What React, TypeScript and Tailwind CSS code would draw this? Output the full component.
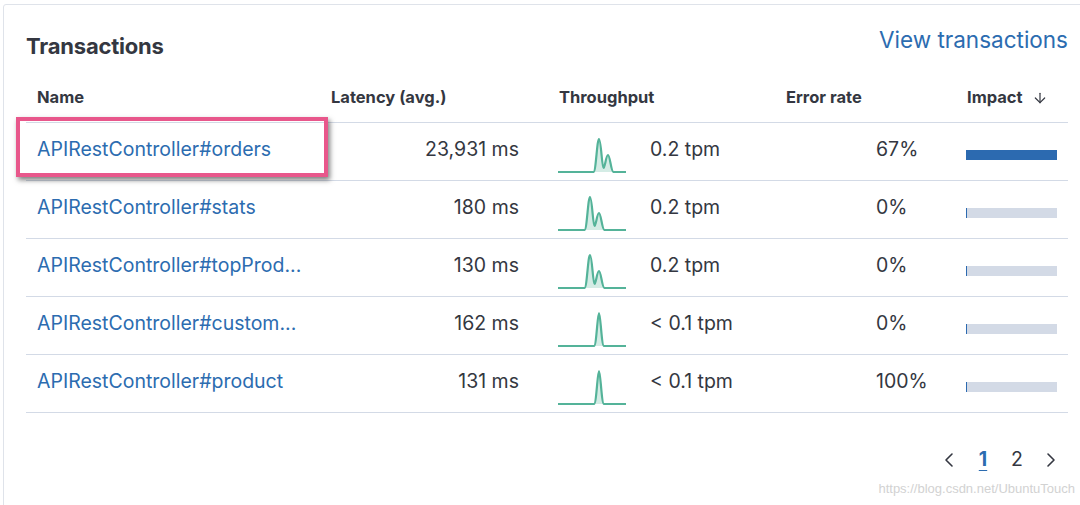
import React from 'react';
import { ArrowDown, ChevronLeft, ChevronRight } from 'lucide-react';

type Row = {
    name: string;
    latency: string;
    throughput: string;
    errorRate: string;
    impact: number;
    spark: 'double' | 'doubleEarly' | 'single';
};

const rows: Row[] = [
    { name: 'APIRestController#orders', latency: '23,931 ms', throughput: '0.2 tpm', errorRate: '67%', impact: 100, spark: 'double' },
    { name: 'APIRestController#stats', latency: '180 ms', throughput: '0.2 tpm', errorRate: '0%', impact: 0, spark: 'doubleEarly' },
    { name: 'APIRestController#topProd...', latency: '130 ms', throughput: '0.2 tpm', errorRate: '0%', impact: 0, spark: 'doubleEarly' },
    { name: 'APIRestController#custom...', latency: '162 ms', throughput: '< 0.1 tpm', errorRate: '0%', impact: 0, spark: 'single' },
    { name: 'APIRestController#product', latency: '131 ms', throughput: '< 0.1 tpm', errorRate: '100%', impact: 0, spark: 'single' },
];

// sparkline curves, drawn in a 68x36 box with the baseline at y=35
const sparkPaths: Record<Row['spark'], string> = {
    double: 'M0 35 L35.5 35 C38 35 39 2 41 2 C43 2 44 31 45.5 31 C47 31 48 18 50 18 C52 18 53 35 55.5 35 L68 35',
    doubleEarly: 'M0 35 L26.5 35 C29 35 30 2 32 2 C34 2 35 31 36.5 31 C38 31 39 18 41 18 C43 18 44 35 46.5 35 L68 35',
    single: 'M0 35 L36 35 C38.5 35 39.5 2 41 2 C42.5 2 43.5 35 46 35 L68 35',
};

const Sparkline: React.FC<{ kind: Row['spark'] }> = ({ kind }) => (
    <svg width="68" height="36" viewBox="0 0 68 36" className="shrink-0 mt-[6px]">
        <path d={sparkPaths[kind] + ' Z'} fill="#54b399" fillOpacity="0.25" stroke="none" />
        <path d={sparkPaths[kind]} fill="none" stroke="#54b399" strokeWidth="2.2" strokeLinejoin="round" />
    </svg>
);

const ImpactBar: React.FC<{ value: number }> = ({ value }) => (
    <div className="relative w-[91px] h-[10px] bg-[#d3dae6] mt-[6px]">
        <div className="absolute left-0 top-0 h-full bg-[#2c6ab0]" style={{ width: `${Math.max(value, 1.6)}%` }} />
    </div>
);

const cols = 'grid grid-cols-[294px_228px_227px_180px_113px]';

const App: React.FC = () => {
    return (
        <div className="relative w-[1080px] h-[505px] overflow-hidden bg-white text-[#343741]" style={{ fontFamily: 'Inter, "Noto Sans", sans-serif' }}>
            <div className="ml-[3px] mt-[4px] w-[1100px] h-[540px] border border-[#dfe3ea] rounded-[3px] pt-[21px] pl-[22px]">
                <div className="flex w-[1042px] justify-between items-start">
                    <h2 className="mt-[6px] text-[22px] leading-[28px] font-bold tracking-[-0.2px]">Transactions</h2>
                    <a className="text-[22.5px] leading-[28px] text-[#2c6cb0]">View transactions</a>
                </div>

                <div className="w-[1042px] mt-[13px]">
                    <div className={`${cols} h-[50px] border-b border-[#d3dae6] items-center text-[16.5px] font-bold`}>
                        <div className="px-[11px]">Name</div>
                        <div className="px-[11px]">Latency (avg.)</div>
                        <div className="px-[11px]">Throughput</div>
                        <div className="px-[11px]">Error rate</div>
                        <div className="px-[12px] flex items-center gap-[9px]">
                            Impact
                            <ArrowDown size={16} strokeWidth={1.8} />
                        </div>
                    </div>

                    {rows.map((r) => (
                        <div key={r.name} className={`${cols} h-[58px] border-b border-[#d3dae6] items-center text-[19.5px]`}>
                            <div className="px-[11px] pb-[4px] text-[#2c6cb0] whitespace-nowrap">{r.name}</div>
                            <div className="pr-[29px] pb-[4px] text-right">{r.latency}</div>
                            <div className="pl-[10px] flex items-center">
                                <Sparkline kind={r.spark} />
                                <span className="ml-[24px] pb-[4px] whitespace-nowrap">{r.throughput}</span>
                            </div>
                            <div className="pl-[101px] pb-[4px]">{r.errorRate}</div>
                            <div className="pl-[11px]">
                                <ImpactBar value={r.impact} />
                            </div>
                        </div>
                    ))}

                    <div className="flex justify-end mt-[33px] text-[19.5px]">
                        <button className="w-[34px] h-[28px] flex items-center justify-center text-[#343741]">
                            <ChevronLeft size={24} strokeWidth={1.6} />
                        </button>
                        <button className="w-[34px] h-[28px] flex items-center justify-center font-bold text-[#2c6cb0] underline underline-offset-[4px]">1</button>
                        <button className="w-[34px] h-[28px] flex items-center justify-center">2</button>
                        <button className="w-[34px] h-[28px] flex items-center justify-center text-[#343741]">
                            <ChevronRight size={24} strokeWidth={1.6} />
                        </button>
                    </div>
                </div>
            </div>

            {/* annotation box around the first transaction */}
            <div className="absolute left-[16px] top-[117px] w-[312px] h-[60px] border-[4px] border-[#e8578b] shadow-[2px_3px_5px_rgba(0,0,0,0.5)]" />

            {/* watermark */}
            <div className="absolute right-[5px] bottom-[7px] text-[13px] text-[#d2d2d2]" style={{ fontFamily: '"Liberation Sans", Arial, sans-serif' }}>
                https://blog.csdn.net/UbuntuTouch
            </div>
        </div>
    );
};

export default App;
